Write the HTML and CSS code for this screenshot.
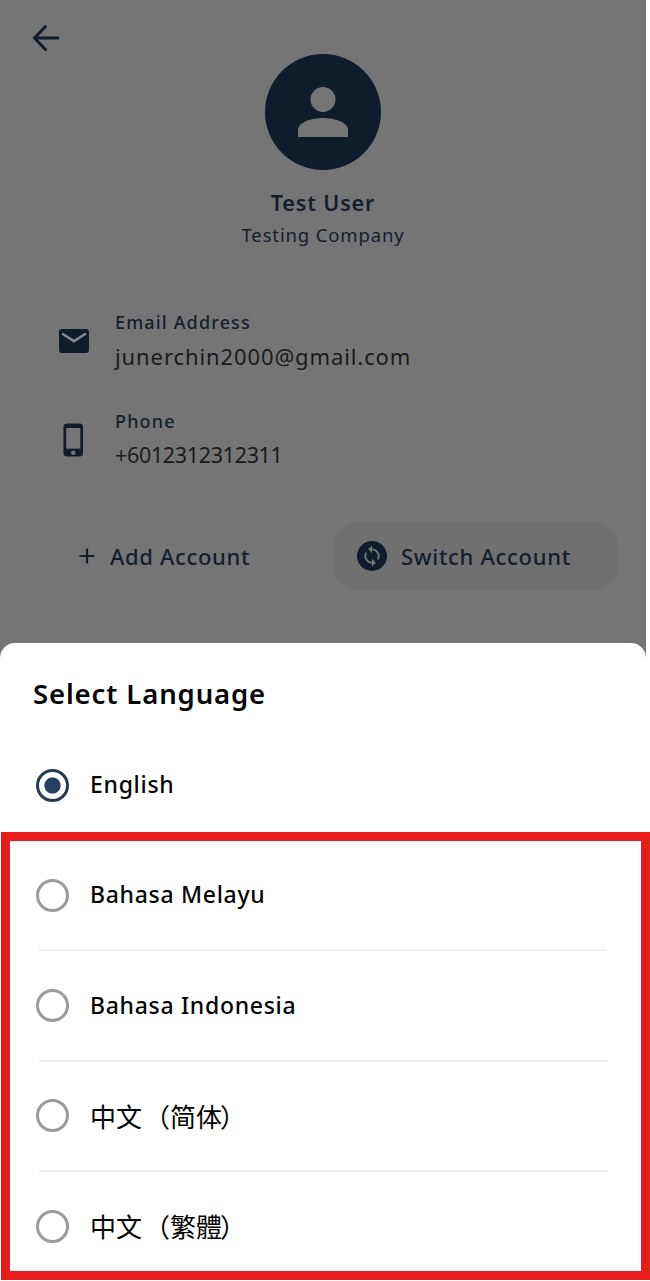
FILE: index.html
```
<!DOCTYPE html>
<html lang="en">
<head>
<meta charset="utf-8">
<title>Select Language</title>
<link rel="stylesheet" href="styles.css">
</head>
<body>
<div class="screen">
  <main class="profile">
    <header class="toolbar">
      <svg class="back" viewBox="0 0 28 28" aria-label="Back"><path d="M26 14H3M13.5 2.5L2.5 14l11 11.5"/></svg>
    </header>
    <section class="identity">
      <div class="avatar">
        <svg viewBox="0 0 50 50"><circle cx="25" cy="12.5" r="12.5"/><path d="M0 50v-7c0-8 14-12 25-12s25 4 25 12v7z"/></svg>
      </div>
      <h1 class="name">Test User</h1>
      <p class="company">Testing Company</p>
    </section>
    <section class="contacts">
      <div class="contact">
        <svg class="contact-icon mail" viewBox="0 0 30 24"><rect width="30" height="24" rx="3"/><path d="M3 4.5l12 7.6 12-7.6"/></svg>
        <div>
          <div class="label">Email Address</div>
          <div class="value value-email">junerchin2000@gmail.com</div>
        </div>
      </div>
      <div class="contact">
        <svg class="contact-icon phone" viewBox="0 0 30 34"><rect x="4.5" y="0.5" width="19.5" height="33" rx="3.5"/><path d="M7.2 5h14.1v20.7H7.2z"/><circle cx="14.3" cy="29.7" r="2.3"/></svg>
        <div>
          <div class="label">Phone</div>
          <div class="value value-phone">+6012312312311</div>
        </div>
      </div>
    </section>
    <section class="actions">
      <div class="action add">
        <svg class="plus" viewBox="0 0 16 16"><path d="M8 .5v15M.5 8h15"/></svg>
        <span class="add-text">Add Account</span>
      </div>
      <div class="action switch">
        <svg class="sync" viewBox="0 0 30 30"><circle cx="15" cy="15" r="15"/><path transform="translate(3.6 3.6) scale(.95)" d="M12 4V1L8 5l4 4V6c3.31 0 6 2.69 6 6 0 1.01-.25 1.97-.7 2.8l1.46 1.46C19.54 15.03 20 13.57 20 12c0-4.42-3.58-8-8-8zm0 14c-3.31 0-6-2.69-6-6 0-1.01.25-1.97.7-2.8L5.24 7.74C4.46 8.97 4 10.43 4 12c0 4.42 3.58 8 8 8v3l4-4-4-4v3z"/></svg>
        <span class="switch-text">Switch Account</span>
      </div>
    </section>
  </main>
  <section class="sheet">
    <h2 class="title">Select Language</h2>
    <div class="option selected"><i class="radio"></i><span class="text">English</span></div>
    <div class="highlight">
      <div class="option"><i class="radio"></i><span class="text">Bahasa Melayu</span></div>
      <div class="option"><i class="radio"></i><span class="text indonesia">Bahasa Indonesia</span></div>
      <div class="option"><i class="radio"></i><span class="cjk" lang="zh-Hans">中文<span class="open">（</span>简体<span class="close">）</span></span></div>
      <div class="option"><i class="radio"></i><span class="cjk" lang="zh-Hant">中文<span class="open">（</span>繁體<span class="close">）</span></span></div>
    </div>
  </section>
</div>
</body>
</html>
```
FILE: styles.css
```
* { box-sizing: border-box; }
body { margin: 0; background: #fff; color: #050505; font-family: "Noto Sans", "Noto Sans CJK SC", sans-serif; }
h1, h2, p { margin: 0; }
svg { display: block; flex: none; }
.screen { width: 650px; height: 1281px; overflow: hidden; }

.profile { width: 646px; height: 658px; background: #757575; color: #141e2d; }
.toolbar { height: 54px; padding: 24px 0 0 32px; }
.back { width: 28px; height: 28px; fill: none; stroke: #111d2c; stroke-width: 3; stroke-linecap: round; stroke-linejoin: round; }
.identity { display: flex; flex-direction: column; align-items: center; }
.avatar { width: 116px; height: 116px; border-radius: 50%; background: #101c2b; display: flex; justify-content: center; padding-top: 33px; }
.avatar svg { width: 50px; height: 50px; fill: #757575; }
.name { margin-top: 18px; font-size: 21.5px; line-height: 30px; font-weight: 600; letter-spacing: .85px; }
.company { margin-top: 3px; font-size: 18.5px; line-height: 28px; letter-spacing: .85px; }

.contacts { padding: 60px 0 0 59px; display: flex; flex-direction: column; gap: 37px; }
.contact { display: flex; align-items: center; gap: 26px; height: 62px; }
.contact-icon { width: 30px; fill: #101c2b; }
.mail { height: 24px; margin-top: 2px; }
.mail path { fill: none; stroke: #858a90; stroke-width: 2.6; }
.phone { height: 34px; margin-top: 1px; }
.phone path, .phone circle { fill: #757575; }
.label { font-size: 18px; line-height: 28px; font-weight: 500; letter-spacing: 1.15px; }
.value { font-size: 22px; line-height: 34px; color: #1b1b1b; margin-top: 3px; }
.value-email { letter-spacing: .9px; }
.value-phone { font-size: 21.5px; letter-spacing: -.33px; }

.actions { display: flex; padding: 0 28px 0 59px; justify-content: space-between; margin-top: 52px; }
.action { display: flex; align-items: center; height: 68px; font-size: 22px; font-weight: 500; letter-spacing: .7px; }
.add { padding-left: 20px; gap: 15px; }
.add-text { letter-spacing: .65px; }
.add-text, .switch-text { padding-bottom: 1px; }
.plus { width: 16px; height: 16px; fill: none; stroke: #141e2d; stroke-width: 2.2; }
.switch { width: 284px; padding-left: 23px; gap: 14px; border-radius: 24px; background: #707070; }
.sync { width: 30px; height: 30px; fill: #101c2b; }
.sync path { fill: #757575; }

.sheet { width: 646px; margin-top: -15px; background: #fff; border-radius: 15px 15px 0 0; }
.title { padding: 31px 0 0 33px; font-size: 27.5px; line-height: 40px; font-weight: 600; letter-spacing: .87px; }
.option { display: flex; align-items: center; gap: 21px; font-size: 23px; font-weight: 500; letter-spacing: .7px; line-height: 34px; }
.text { padding-bottom: 2px; }
.indonesia { padding-bottom: 0; }
.selected { padding-left: 36px; height: 56px; margin-top: 43px; }
.radio { flex: none; width: 33px; height: 33px; border: 3px solid #9b9b9b; border-radius: 50%; }
.selected .radio { border-color: #263b52; background: radial-gradient(circle, #233f61 0 7.7px, transparent 8.5px); }
.highlight { width: 649px; height: 448px; margin: 19px 0 0 1px; border: 9px solid #e71d1d; padding-left: 29px; }
.highlight .option { width: 568px; height: 110.3px; border-bottom: 2px solid #efefef; }
.highlight .radio { margin-left: -3px; }
.highlight .option:last-child { height: 109px; border-bottom: 0; }
.cjk { font-family: "Noto Sans CJK SC", sans-serif; font-size: 26px; font-weight: 400; letter-spacing: 0; }
.cjk:lang(zh-Hant) { font-family: "Noto Sans CJK TC", sans-serif; }
.cjk:lang(zh-Hant) .open, .cjk:lang(zh-Hant) .close { font-family: "Noto Sans CJK SC", sans-serif; }
.open { margin-left: 2px; }
.close { margin-left: -2px; }
```
